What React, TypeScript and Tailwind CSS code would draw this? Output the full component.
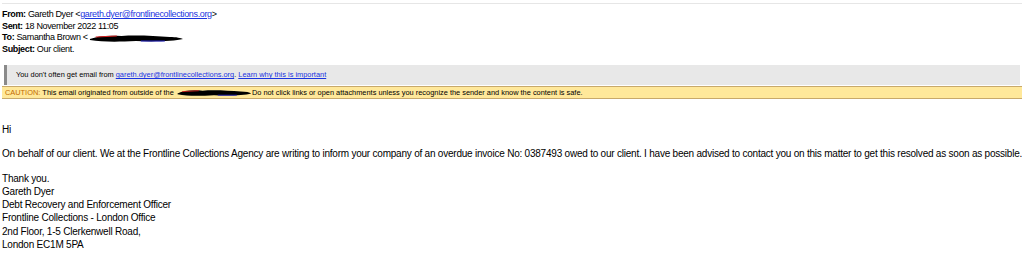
import React from 'react';

const Redact: React.FC<{ w: number; h: number }> = ({ w, h }) => (
  <svg width={w} height={h} viewBox="0 0 100 10" preserveAspectRatio="none" className="inline-block align-middle">
    <path d="M2 6 C10 3 20 2 35 3 C50 2 70 3 85 4 C92 4 97 5 99 6 C90 8 70 9 50 8 C30 9 15 9 2 7 Z" fill="#000" />
    <path d="M8 4 L30 3" stroke="#d22" strokeWidth="1" />
    <path d="M55 8 L80 8" stroke="#22c" strokeWidth="1" />
  </svg>
);

const headerFont = { fontFamily: '"Liberation Sans", Arial, sans-serif' };

export default function App() {
  return (
    <div className="w-[1024px] h-[265px] bg-white overflow-hidden text-black">
      <div className="mx-[2px] mt-[3px] border-t border-[#e6e6e6]" />
      <div className="pl-[2px] pt-[5px] text-[9px] leading-[11.5px] tracking-[-0.35px]" style={headerFont}>
        <div>
          <b>From:</b> Gareth Dyer &lt;<a className="text-[#1a33e0] underline">gareth.dyer@frontlinecollections.org</a>&gt;
        </div>
        <div>
          <b>Sent:</b> 18 November 2022 11:05
        </div>
        <div className="flex items-center">
          <span>
            <b>To:</b> Samantha Brown &lt;
          </span>
          <Redact w={96} h={10} />
        </div>
        <div>
          <b>Subject:</b> Our client.
        </div>
      </div>

      <div className="mt-[10px] mx-[4px] h-[20px] bg-[#e8e8e8] border-l-[3px] border-[#8a8a8a] flex items-center pl-[9px] text-[7.4px] whitespace-nowrap" style={headerFont}>
        You don't often get email from&nbsp;<a className="text-[#1a33e0] underline">gareth.dyer@frontlinecollections.org</a>.&nbsp;<a className="text-[#1a33e0] underline">Learn why this is important</a>
      </div>
      <div className="mx-[2px] mt-[1px] h-[13px] bg-[#ffe89a] border-y border-[#c8a96a] flex items-center pl-[3px] text-[7.4px] whitespace-nowrap" style={headerFont}>
        <span className="text-[#c26a00]">CAUTION:</span>&nbsp;This email originated from outside of the&nbsp;
        <Redact w={76} h={9} />
        Do not click links or open attachments unless you recognize the sender and know the content is safe.
      </div>

      <div className="pl-[2px] pt-[24px] text-[10px] leading-[13.3px] tracking-[-0.22px] whitespace-nowrap" style={{ fontFamily: '"Comic Sans MS", "Liberation Sans", sans-serif' }}>
        <p>Hi</p>
        <p className="mt-[11px]">
          On behalf of our client. We at the Frontline Collections Agency are writing to inform your company of an overdue invoice No: 0387493 owed to our client. I have been advised to contact you on this matter to get this resolved as soon as possible.
        </p>
        <p className="mt-[11px]">Thank you.</p>
        <p>Gareth Dyer</p>
        <p>Debt Recovery and Enforcement Officer</p>
        <p>Frontline Collections - London Office</p>
        <p>2nd Floor, 1-5 Clerkenwell Road,</p>
        <p>London EC1M 5PA</p>
      </div>
    </div>
  );
}
